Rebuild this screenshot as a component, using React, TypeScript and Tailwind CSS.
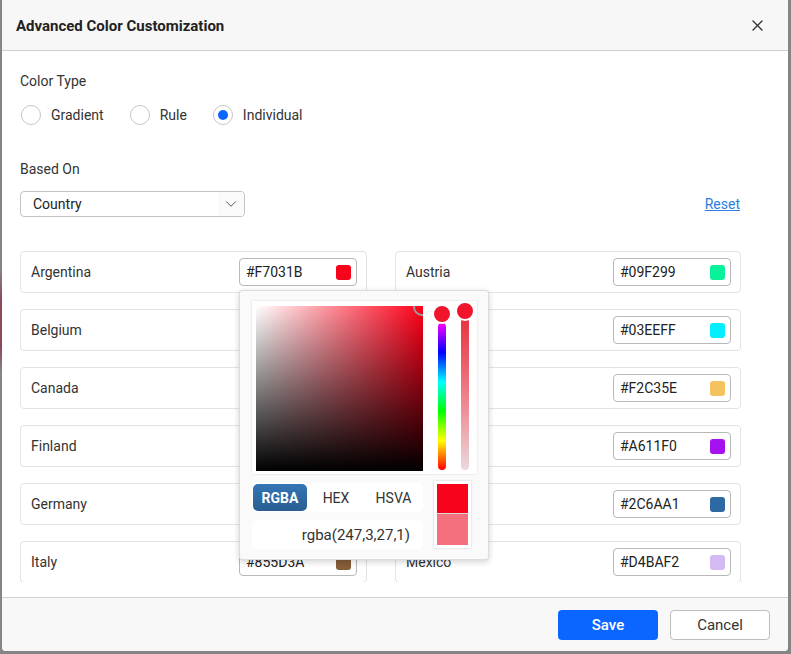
import { ChevronDown } from "lucide-react";

const rows = [
  { left: { name: "Argentina", hex: "#F7031B" }, right: { name: "Austria", hex: "#09F299" } },
  { left: { name: "Belgium", hex: "#1F8BE0" }, right: { name: "Brazil", hex: "#03EEFF" } },
  { left: { name: "Canada", hex: "#E2487C" }, right: { name: "Denmark", hex: "#F2C35E" } },
  { left: { name: "Finland", hex: "#5BB463" }, right: { name: "France", hex: "#A611F0" } },
  { left: { name: "Germany", hex: "#F08A24" }, right: { name: "India", hex: "#2C6AA1" } },
  { left: { name: "Italy", hex: "#855D3A" }, right: { name: "Mexico", hex: "#D4BAF2" } },
];

function ColorPicker() {
  return (
    <div className="absolute left-[218px] top-[38px] z-10 w-[250px] h-[270px] bg-[#fafafa] border border-[#dcdcdc] rounded-[3px] shadow-[0_2px_6px_rgba(0,0,0,0.18)] pt-[10px] pl-[12px]">
      {/* saturation + sliders */}
      <div className="relative w-[225px] h-[173px] bg-white shadow-[0_0_2px_rgba(0,0,0,0.15)]">
        <div className="absolute left-[4px] top-[5px] w-[167px] h-[165px] overflow-hidden bg-[linear-gradient(to_top,#000,transparent),linear-gradient(to_right,#fff,#ff0019)]">
          <div className="absolute -right-[8px] -top-[8px] w-[18px] h-[18px] rounded-full border-2 border-[#9a9a9a]" />
        </div>
        <div className="absolute left-[186px] top-[22px] w-[8px] h-[147px] rounded-full bg-[linear-gradient(to_bottom,#f0f,#00f,#0ff,#0f0,#ff0,#f00)]" />
        <div className="absolute left-[180px] top-[3px] w-[20px] h-[20px] rounded-full bg-[#f0142c] border-2 border-white" />
        <div className="absolute left-[209px] top-[17px] w-[8px] h-[152px] rounded-full bg-[linear-gradient(to_bottom,#e8303f,#ee8e97_60%,#eadadc)]" />
        <div className="absolute left-[203px] top-0 w-[20px] h-[20px] rounded-full bg-[#f0142c] border-2 border-white" />
      </div>
      <div className="flex gap-[11px] mt-[7px]">
        <div className="w-[171px]">
          <div className="mt-[2px] h-[29px] bg-white rounded-[5px] p-[1px] flex items-stretch text-[14px] leading-[20px] text-[#333]">
            <div className="w-[54px] rounded-[5px] bg-[linear-gradient(to_bottom,#3376b4,#295d92)] text-white font-bold flex items-center justify-center">
              RGBA
            </div>
            <div className="w-[58px] flex items-center justify-center">HEX</div>
            <div className="w-[57px] flex items-center justify-center">HSVA</div>
          </div>
          <div className="mt-[8px] h-[29px] bg-white rounded-[5px] flex items-center justify-end pr-[13px] text-[15px] leading-[20px] text-[#333]">
            rgba(247,3,27,1)
          </div>
        </div>
        <div className="w-[37px] h-[67px] bg-white p-[3px] shadow-[0_0_2px_rgba(0,0,0,0.2)] flex flex-col">
          <div className="h-[29px] bg-[#f7031b]" />
          <div className="h-px bg-[#d8d8d8]" />
          <div className="flex-1 bg-[#f5707e]" />
        </div>
      </div>
    </div>
  );
}

function Row({ name, hex, picker }: { name: string; hex: string; picker?: boolean }) {
  return (
    <div className="relative h-[42px] border border-[#e3e3e3] rounded-[4px] flex items-center justify-between pl-[10px] pr-[9px]">
      <span className="text-[14px] leading-[20px] text-[#333] -mt-px">{name}</span>
      <div className="w-[118px] h-[28px] border border-[#b8b8b8] rounded-[4px] flex items-center justify-between pl-[6px] pr-[5px] bg-white">
        <span className="text-[14px] leading-[20px] text-[#222]">{hex}</span>
        <span className="w-[15px] h-[15px] rounded-[3px]" style={{ backgroundColor: hex }} />
      </div>
      {picker && <ColorPicker />}
    </div>
  );
}

function Radio({ label, checked }: { label: string; checked?: boolean }) {
  return (
    <label className="flex items-center gap-[10px]">
      <span className="w-[20px] h-[20px] rounded-full border border-[#c6c6c6] bg-white flex items-center justify-center">
        {checked && <span className="w-[10px] h-[10px] rounded-full bg-[#0b66ff]" />}
      </span>
      <span className="text-[14px] leading-[20px] text-[#333]">{label}</span>
    </label>
  );
}

export default function App() {
  return (
    <div className="w-[791px] h-[654px] bg-[#858585] flex font-['Roboto','Liberation_Sans',sans-serif]">
      <div className="w-[2px] h-full bg-[linear-gradient(to_bottom,#858585_0%,#858585_41%,#8b4a58_46%,#8b4a58_53%,#858585_57%,#858585_100%)]" />
      <div className="w-[786px] h-[651px] bg-white rounded-b-[4px] flex flex-col overflow-hidden">
        {/* Header */}
        <div className="h-[51px] shrink-0 bg-[#f7f7f7] border-b border-[#cfcfcf] flex items-center justify-between pl-[14px] pr-[25px]">
          <h1 className="text-[15px] leading-[20px] font-bold text-[#222] mt-px">Advanced Color Customization</h1>
          <svg width="11" height="11" viewBox="0 0 11 11" className="text-[#333]">
            <path d="M1 1L10 10M10 1L1 10" stroke="currentColor" strokeWidth="1.4" strokeLinecap="round" />
          </svg>
        </div>

        {/* Body */}
        <div className="flex-1 flex flex-col">
          <div className="h-[531px] overflow-hidden pl-[18px] pt-[20px]">
            <div className="w-[721px]">
              <div className="h-[20px] leading-[20px] text-[14px] text-[#333]">Color Type</div>
              <div className="mt-[14px] flex items-center gap-[26px] pl-px">
                <Radio label="Gradient" />
                <Radio label="Rule" />
                <Radio label="Individual" checked />
              </div>
              <div className="mt-[34px] h-[20px] leading-[20px] text-[14px] text-[#333]">Based On</div>
              <div className="mt-[12px] flex items-center justify-between">
                <div className="w-[225px] h-[26px] border border-[#c4c4c4] rounded-[4px] flex items-stretch">
                  <span className="flex-1 flex items-center pl-[12px] text-[14px] leading-[20px] text-[#222]">Country</span>
                  <span className="w-[26px] bg-[#fafafa] rounded-r-[4px] flex items-center justify-center text-[#555]">
                    <ChevronDown size={18} strokeWidth={1.3} />
                  </span>
                </div>
                <a className="text-[14px] leading-[20px] text-[#2a7de1] underline pr-px">Reset</a>
              </div>
              <div className="mt-[34px] grid grid-cols-[347px_346px] gap-x-[28px] gap-y-[16px]">
                {rows.map((r, i) => (
                  <div key={r.left.name} className="contents">
                    <Row name={r.left.name} hex={r.left.hex} picker={i === 0} />
                    <Row name={r.right.name} hex={r.right.hex} />
                  </div>
                ))}
              </div>
            </div>
          </div>
        </div>

        {/* Footer */}
        <div className="h-[54px] shrink-0 bg-[#f8f8f8] border-t border-[#d0d0d0] flex items-center justify-end gap-[12px] pr-[18px] pt-px">
          <button className="w-[100px] h-[30px] rounded-[4px] bg-[#0b66ff] text-white text-[15px] font-medium">
            Save
          </button>
          <button className="w-[100px] h-[30px] rounded-[4px] bg-white border border-[#bdbdbd] text-[15px] text-[#333]">
            Cancel
          </button>
        </div>
      </div>
    </div>
  );
}
